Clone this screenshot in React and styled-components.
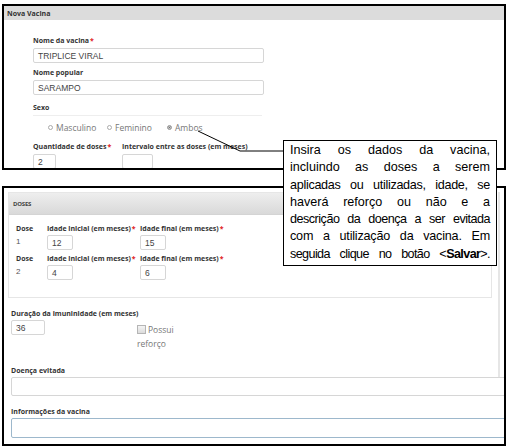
import React from "react";
import styled, { createGlobalStyle } from "styled-components";

const GlobalStyle = createGlobalStyle`
  body {
    margin: 0;
    background: #ffffff;
    font-family: "Open Sans", "Liberation Sans", sans-serif;
  }
`;

const Page = styled.div`
  position: relative;
  width: 508px;
  height: 447px;
  padding: 4px 0 0 2px;
  box-sizing: border-box;
  overflow: hidden;
`;

const Frame = styled.div`
  width: 504px;
  height: ${(p) => p.$height}px;
  margin-top: ${(p) => p.$top || 0}px;
  border: 2px solid #000;
  box-sizing: border-box;
  background: #fff;
  overflow: hidden;
`;

const PanelHeader = styled.div`
  height: 14px;
  background: #dcdcdc;
  padding-left: 3px;
  display: flex;
  align-items: center;
  font-size: 7px;
  font-weight: 700;
  color: #333;
`;

const FormBody = styled.div`
  display: flex;
  flex-direction: column;
  padding: ${(p) => p.$pad};
`;

const Label = styled.div`
  font-size: 7px;
  font-weight: 700;
  color: #333;
  line-height: 10px;
  margin-top: ${(p) => p.$top || 0}px;
  white-space: nowrap;
`;

const Req = styled.span`
  color: #e0191c;
  margin-left: 1px;
`;

const Input = styled.div`
  width: ${(p) => p.$w}px;
  height: ${(p) => p.$h || 15}px;
  margin-top: ${(p) => p.$top ?? 2}px;
  border: 1px solid ${(p) => (p.$focus ? "#9db8cc" : "#d6d6d6")};
  border-radius: 2px;
  box-sizing: border-box;
  padding-left: 4px;
  display: flex;
  align-items: center;
  font-family: "Liberation Sans", Arial, sans-serif;
  font-size: 8.5px;
  color: #444;
  background: #fff;
`;

const Rule = styled.div`
  width: 229px;
  height: 1px;
  background: #eeeeee;
  margin-top: 2px;
`;

const RadioRow = styled.div`
  display: flex;
  align-items: center;
  padding-left: 15px;
  margin-top: 5px;
  height: 12px;
`;

const RadioItem = styled.label`
  display: flex;
  align-items: center;
  gap: 3px;
  width: ${(p) => p.$w}px;
  font-size: 8.5px;
  color: #777;
`;

const RadioDot = styled.span`
  width: 5px;
  height: 5px;
  border-radius: 50%;
  border: 1px solid #aaa;
  box-sizing: border-box;
  background: ${(p) => (p.$on ? "#555" : "#fff")};
  box-shadow: ${(p) => (p.$on ? "inset 0 0 0 1px #ccc" : "none")};
`;

const Row = styled.div`
  display: flex;
  gap: ${(p) => p.$gap || 0}px;
  margin-top: ${(p) => p.$top || 0}px;
`;

const Field = styled.div`
  display: flex;
  flex-direction: column;
  width: ${(p) => p.$w}px;
`;

const DosesBox = styled.div`
  width: 484px;
  height: 106px;
  margin: 4px 0 0 4px;
  border: 1px solid #e6e6e6;
  box-sizing: border-box;
`;

const DosesHeader = styled.div`
  height: 21px;
  background: linear-gradient(#eeeeee, #d9d9d9);
  border-bottom: 1px solid #d4d4d4;
  padding-left: 4px;
  display: flex;
  align-items: center;
  font-size: 6px;
  font-weight: 700;
  color: #444;
  letter-spacing: -0.2px;
`;

const DoseGrid = styled.div`
  display: grid;
  grid-template-columns: 31px 93px 120px;
  padding: 9px 0 0 7px;
  row-gap: 4px;
`;

const DoseNum = styled.div`
  display: flex;
  flex-direction: column;
`;

const NumText = styled.div`
  font-family: "Liberation Sans", Arial, sans-serif;
  font-size: 8px;
  color: #555;
  margin-top: 3px;
`;

const UpperArea = styled.div`
  height: 190px;
  border-right: 2px solid #e6e6e6;
  width: 496px;
  box-sizing: border-box;
`;

const ImunRow = styled.div`
  display: flex;
  padding-left: 7px;
  margin-top: 11px;
`;

const CheckWrap = styled.div`
  margin: 14px 0 0 92px;
  font-size: 8.5px;
  color: #777;
  line-height: 14px;
`;

const CheckBox = styled.span`
  display: inline-block;
  width: 7px;
  height: 7px;
  border: 1px solid #b5b5b5;
  background: linear-gradient(#f4f4f4, #dcdcdc);
  margin-right: 2px;
  vertical-align: -1px;
`;

const LowerFields = styled.div`
  display: flex;
  flex-direction: column;
  padding-left: 7px;
  margin-top: -16px;
`;

const Callout = styled.div`
  position: absolute;
  left: 283px;
  top: 140px;
  width: 214px;
  height: 126px;
  border: 1.5px solid #000;
  box-sizing: border-box;
  background: #fff;
  padding: 1px 6px 0 6px;
  font-family: "Liberation Sans", Arial, sans-serif;
  font-size: 12.6px;
  line-height: 17.3px;
  color: #000;
`;

const CalloutLine = styled.span`
  display: block;
  text-align: justify;
  text-align-last: justify;
  white-space: nowrap;
  letter-spacing: ${(p) => p.$ls || 0}px;
`;

const Connector = styled.svg`
  position: absolute;
  left: 0;
  top: 0;
  pointer-events: none;
`;

const calloutLines = [
  ["Insira os dados da vacina,", 0],
  ["incluindo as doses a serem", 0],
  ["aplicadas ou utilizadas, idade, se", -0.3],
  ["haverá reforço ou não e a", 0],
  ["descrição da doença a ser evitada", -0.5],
  ["com a utilização da vacina. Em", -0.2],
];

const doses = [
  { n: 1, ini: "12", fim: "15" },
  { n: 2, ini: "4", fim: "6" },
];

export default function App() {
  return (
    <>
      <GlobalStyle />
      <Page>
        <Frame $height={166}>
          <PanelHeader>Nova Vacina</PanelHeader>
          <FormBody $pad="16px 0 0 29px">
            <Label>
              Nome da vacina<Req>*</Req>
            </Label>
            <Input $w={231}>TRIPLICE VIRAL</Input>
            <Label $top={5}>Nome popular</Label>
            <Input $w={231}>SARAMPO</Input>
            <Label $top={8}>Sexo</Label>
            <Rule />
            <RadioRow>
              <RadioItem $w={59}>
                <RadioDot />
                Masculino
              </RadioItem>
              <RadioItem $w={60}>
                <RadioDot />
                Feminino
              </RadioItem>
              <RadioItem $w={40}>
                <RadioDot $on />
                Ambos
              </RadioItem>
            </RadioRow>
            <Row $top={9}>
              <Field $w={89}>
                <Label>
                  Quantidade de doses<Req>*</Req>
                </Label>
                <Input $w={23} $top={2}>
                  2
                </Input>
              </Field>
              <Field $w={150}>
                <Label>Intervalo entre as doses (em meses)</Label>
                <Input $w={31} $top={2} />
              </Field>
            </Row>
          </FormBody>
        </Frame>

        <Frame $height={260} $top={16}>
          <UpperArea>
            <DosesBox>
              <DosesHeader>DOSES</DosesHeader>
              <DoseGrid>
                {doses.map((d) => (
                  <React.Fragment key={d.n}>
                    <DoseNum>
                      <Label>Dose</Label>
                      <NumText>{d.n}</NumText>
                    </DoseNum>
                    <Field $w={93}>
                      <Label>
                        Idade inicial (em meses)<Req>*</Req>
                      </Label>
                      <Input $w={26} $top={1}>
                        {d.ini}
                      </Input>
                    </Field>
                    <Field $w={120}>
                      <Label>
                        Idade final (em meses)<Req>*</Req>
                      </Label>
                      <Input $w={26} $top={1}>
                        {d.fim}
                      </Input>
                    </Field>
                  </React.Fragment>
                ))}
              </DoseGrid>
            </DosesBox>
            <ImunRow>
              <Field $w={34}>
                <Label>Duração da imuninidade (em meses)</Label>
                <Input $w={34} $top={1}>
                  36
                </Input>
              </Field>
              <CheckWrap>
                <CheckBox />
                Possui
                <br />
                reforço
              </CheckWrap>
            </ImunRow>
          </UpperArea>
          <LowerFields>
            <Label>Doença evitada</Label>
            <Input $w={495} $top={1} $h={19} />
            <Label $top={11}>Informações da vacina</Label>
            <Input $w={495} $top={1} $h={20} $focus />
          </LowerFields>
        </Frame>

        <Connector width="508" height="447">
          <polyline
            points="198,131 240,151 283,151"
            fill="none"
            stroke="#000"
            strokeWidth="1"
          />
        </Connector>

        <Callout>
          {calloutLines.map(([t, ls]) => (
            <CalloutLine key={t} $ls={ls}>
              {t}
            </CalloutLine>
          ))}
          <CalloutLine $ls={-0.6}>
            seguida clique no botão &lt;<b>Salvar</b>&gt;.
          </CalloutLine>
        </Callout>
      </Page>
    </>
  );
}
